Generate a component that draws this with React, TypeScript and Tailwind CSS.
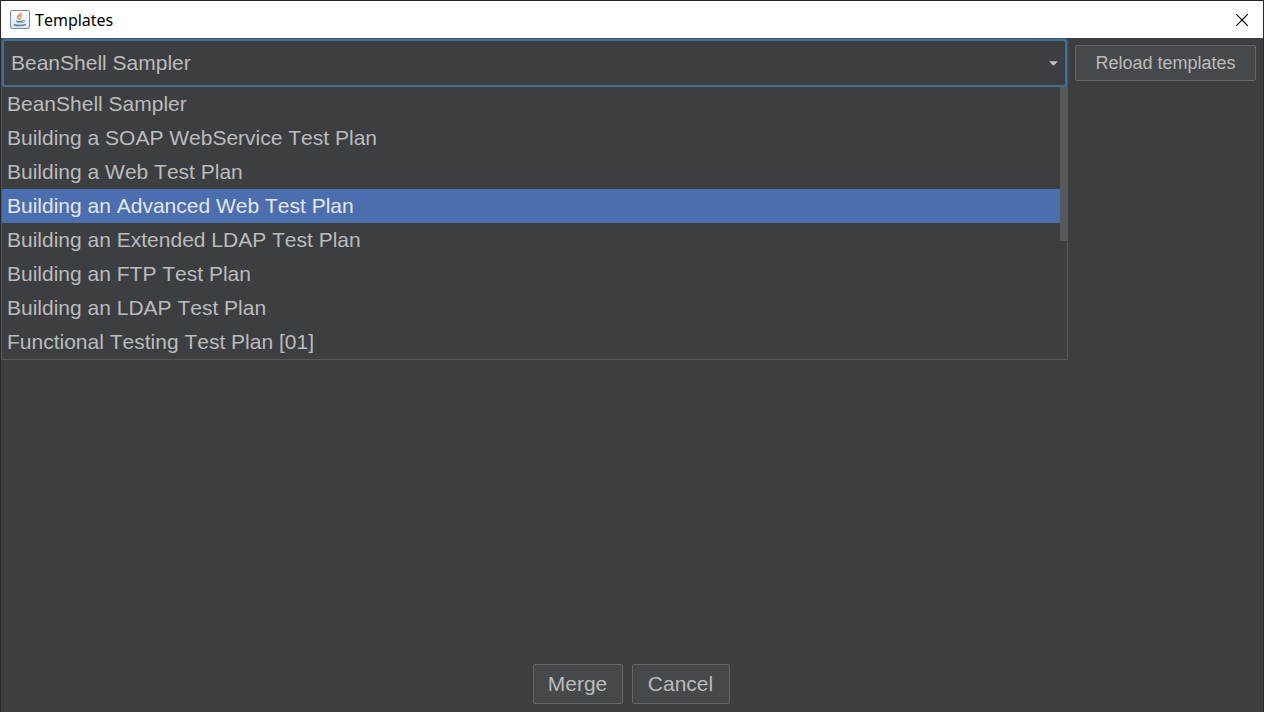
import React, { useState } from 'react';

const templates = [
    "BeanShell Sampler",
    "Building a SOAP WebService Test Plan",
    "Building a Web Test Plan",
    "Building an Advanced Web Test Plan",
    "Building an Extended LDAP Test Plan",
    "Building an FTP Test Plan",
    "Building an LDAP Test Plan",
    "Functional Testing Test Plan [01]",
];

const JavaIcon = () => (
    <svg className="h-5 w-5" viewBox="0 0 20 20" fill="none" aria-hidden="true">
        <defs>
            <linearGradient id="tile" x1="0" y1="0" x2="0" y2="1">
                <stop offset="0" stopColor="#ffffff" />
                <stop offset="1" stopColor="#dce3e9" />
            </linearGradient>
        </defs>
        <rect x="0.5" y="0.5" width="19" height="18" rx="1.5" fill="url(#tile)" stroke="#7590a6" />
        <path d="M10.6 2.8c1.2 1.600-3.200 2.700-2.900 4.400.2 1 1.400 1.500 1.900 2.300" stroke="#e39a62" strokeWidth="2" />
        <path d="M12.4 5c-1.700.7-2.600 1.300-2.200 2.300.3.700.9 1.100.2 2.100" stroke="#e9b08a" strokeWidth="1.6" />
        <path d="M5.8 10.200c1.800.7 5 .7 7 0v2c-1.800.8-4.800.8-6.200 0z" fill="#6687a3" />
        <path d="M13 10.400c2.200-.4 2 1.800-.4 2.300" stroke="#7d9ab2" strokeWidth="1" />
        <path d="M4 14.500c2.600 1.500 9 1.500 11.800-.1" stroke="#5c7f9e" strokeWidth="1.5" />
    </svg>
);

const TitleBar = () => (
    <header className="flex h-[38px] items-center justify-between border-t border-[#222226] bg-white pr-3 pl-[9px]">
        <div className="flex items-center gap-[5px]">
            <JavaIcon />
            <h1 className="font-['Noto_Sans',sans-serif] text-base text-black">Templates</h1>
        </div>
        <button type="button" aria-label="Close" className="p-[3px]">
            <svg className="h-3 w-3" viewBox="0 0 12 12" stroke="#000000" strokeWidth="1.1" aria-hidden="true">
                <path d="M0 0l12 12M12 0L0 12" />
            </svg>
        </button>
    </header>
);

export default function App() {
    const [value, setValue] = useState(templates[0]);
    const [active, setActive] = useState(3);

    return (
        <div className="flex min-h-screen flex-col border-x border-[#2b2b2e] bg-[#3c3f41] font-['Liberation_Sans',Arial,sans-serif] text-[#bbbbbb] [font-kerning:none]">
            <TitleBar />

            <main className="flex flex-1 items-start gap-[7px] pr-[7px]">
                <div className="relative flex-1">
                    <div className="relative px-px pt-px">
                        <select
                            aria-label="Template"
                            value={value}
                            onChange={(e) => setValue(e.target.value)}
                            className="block h-12 w-full appearance-none rounded-[3px] border-2 border-[#466d94] bg-[#3c3f41] px-[7px] text-[21px] ring-1 ring-[#3d5a76] outline-none"
                        >
                            {templates.map((name) => (
                                <option key={name}>{name}</option>
                            ))}
                        </select>
                        <svg className="pointer-events-none absolute top-[23px] right-[10px] h-[5px] w-[9px]" viewBox="0 0 10 5" fill="#bfc1c3" aria-hidden="true">
                            <path d="M0 0h10L5 5z" />
                        </svg>
                    </div>

                    {/* open popup list, drawn over the dialog body */}
                    <ul role="listbox" aria-label="Templates" className="absolute inset-x-0 top-full border-x border-b border-[#55585a] bg-[#3c3f41] text-[21px]">
                        {templates.map((name, index) => (
                            <li
                                key={name}
                                role="option"
                                aria-selected={index === active}
                                onMouseEnter={() => setActive(index)}
                                className={index === active
                                    ? "mr-[7px] h-[34px] bg-[#4b6eaf] px-[5px] leading-[34px] text-[#e4e6ea]"
                                    : "mr-[7px] h-[34px] px-[5px] leading-[34px]"}
                            >
                                {name}
                            </li>
                        ))}
                        <li role="presentation" className="absolute top-0 right-0 h-[154px] w-[7px] bg-[#56595b]" />
                    </ul>
                </div>

                <button type="button" className="mt-[7px] h-9 w-[181px] rounded-[2px] border border-[#65686a] bg-[#45494b] text-lg">
                    Reload templates
                </button>
            </main>

            <footer className="flex justify-center gap-[9px] pr-[2px] pb-2">
                <button type="button" className="h-10 w-[90px] rounded-[2px] border border-[#65686a] bg-[#45494b] text-[21px]">
                    Merge
                </button>
                <button type="button" className="h-10 w-[98px] rounded-[2px] border border-[#65686a] bg-[#45494b] text-[21px]">
                    Cancel
                </button>
            </footer>
        </div>
    );
}
